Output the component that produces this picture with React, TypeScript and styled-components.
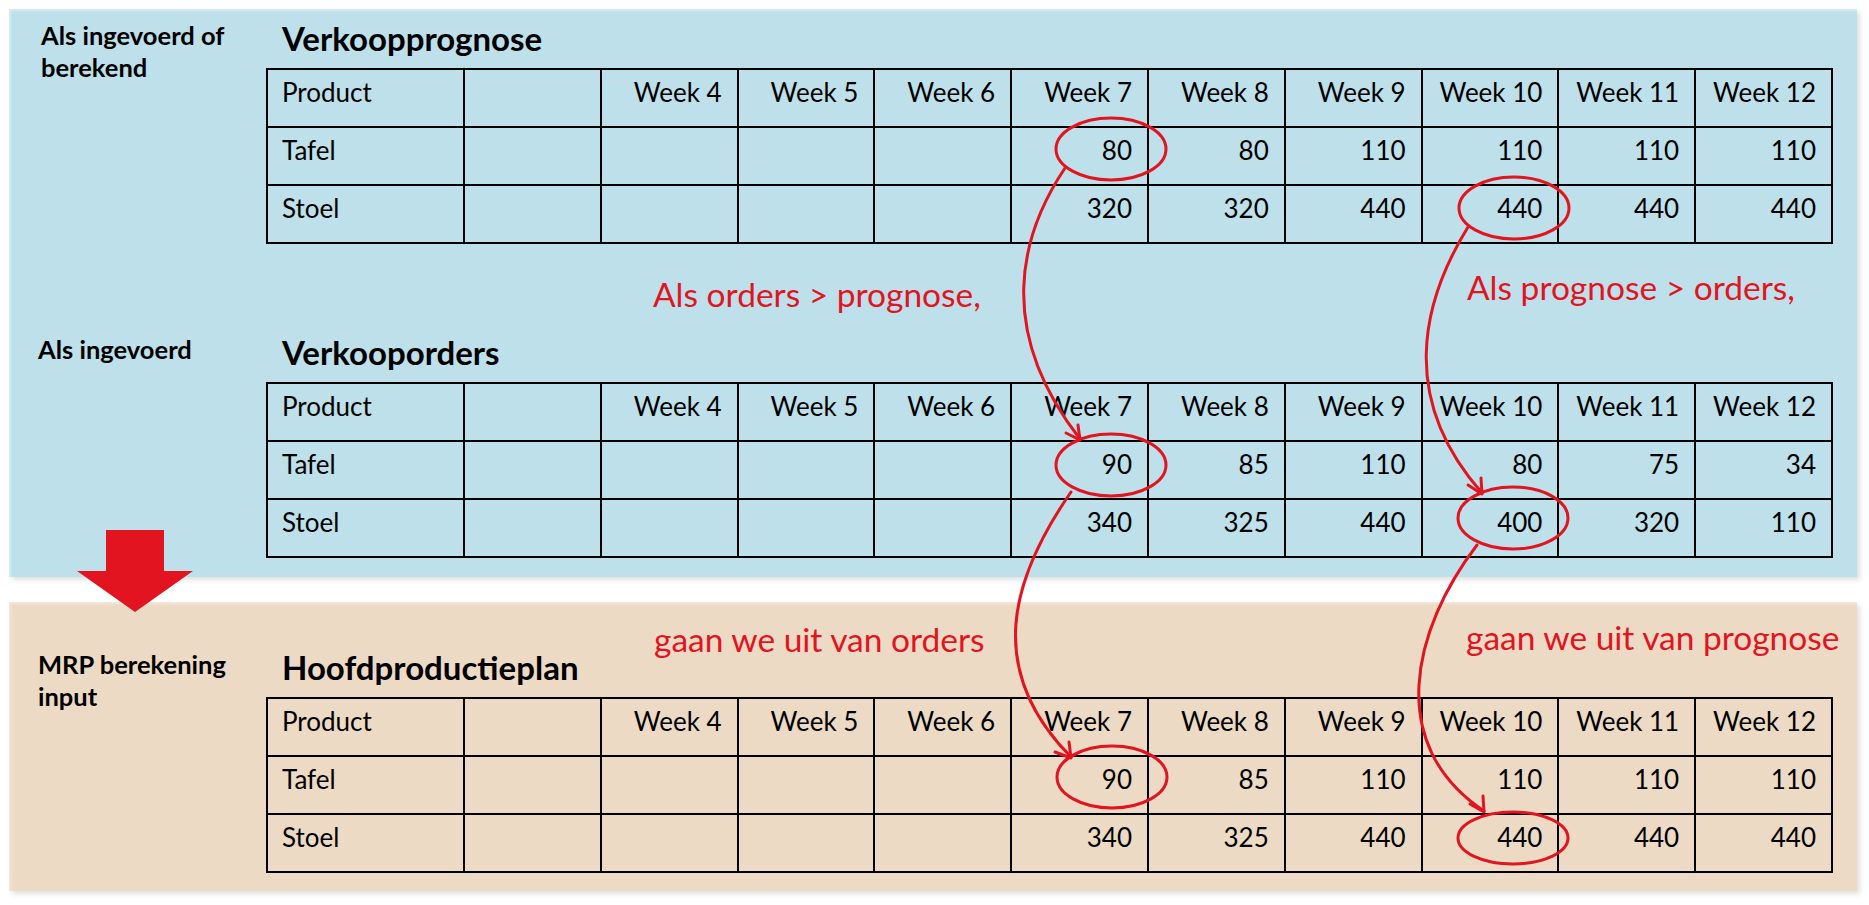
import React from 'react';
import styled, { createGlobalStyle } from 'styled-components';

const RED = '#e2141f';

const GlobalStyle = createGlobalStyle`
  html, body {
    margin: 0;
    padding: 0;
    background: #ffffff;
  }
  body {
    font-family: Lato, 'Liberation Sans', sans-serif;
    color: #000;
  }
`;

const Page = styled.div`
  position: relative;
  width: 1869px;
  height: 905px;
  box-sizing: border-box;
  padding: 9px 0 0 9px;
  display: flex;
  flex-direction: column;
  gap: 25px;
  overflow: hidden;
`;

const Panel = styled.section<{ $tone: 'blue' | 'sand'; $top: number; $bottom: number }>`
  width: 1848px;
  box-sizing: border-box;
  padding: ${(p) => `${p.$top}px 24px ${p.$bottom}px 29px`};
  background: ${(p) => (p.$tone === 'blue' ? '#bde0ea' : '#ecdac5')};
  box-shadow: inset 4px 4px 3px -2px rgba(255, 255, 255, 0.4),
    3px 3px 5px rgba(0, 0, 0, 0.12);
  display: flex;
  flex-direction: column;
  gap: 89px;
`;

const Section = styled.div`
  display: flex;
  align-items: flex-start;
`;

const SideLabel = styled.div<{ $shift?: number }>`
  width: 228px;
  box-sizing: border-box;
  padding-left: ${(p) => p.$shift ?? 0}px;
  font-size: 25.5px;
  font-weight: 700;
  line-height: 32px;
`;

const Body = styled.div`
  display: flex;
  flex-direction: column;
`;

const Heading = styled.h2`
  margin: 0 0 11px;
  padding-left: 16px;
  font-size: 33px;
  font-weight: 700;
  line-height: 38px;
`;

const Table = styled.table`
  width: 1567px;
  table-layout: fixed;
  border-collapse: separate;
  border-spacing: 0;
  border-top: 2px solid #000;
  border-left: 2px solid #000;
`;

const FirstCol = styled.col`
  width: 197px;
`;

const Row = styled.tr`
  height: 58px;
`;

const Cell = styled.td<{ $first?: boolean }>`
  box-sizing: border-box;
  border-right: 2px solid #000;
  border-bottom: 2px solid #000;
  padding: 7px 15px 0 14px;
  vertical-align: top;
  text-align: ${(p) => (p.$first ? 'left' : 'right')};
  font-size: 26px;
  line-height: 30px;
  white-space: nowrap;
`;

const Overlay = styled.svg`
  position: absolute;
  left: 0;
  top: 0;
  width: 1869px;
  height: 905px;
  pointer-events: none;
`;

const Note = styled.span<{ $left: number; $top: number }>`
  position: absolute;
  left: ${(p) => p.$left}px;
  top: ${(p) => p.$top}px;
  color: ${RED};
  font-size: 33.5px;
  line-height: 32px;
  white-space: nowrap;
`;

const weeks = ['Week 4', 'Week 5', 'Week 6', 'Week 7', 'Week 8', 'Week 9', 'Week 10', 'Week 11', 'Week 12'];

type Plan = { title: string; tafel: number[]; stoel: number[] };

const forecast: Plan = {
  title: 'Verkoopprognose',
  tafel: [80, 80, 110, 110, 110, 110],
  stoel: [320, 320, 440, 440, 440, 440],
};

const orders: Plan = {
  title: 'Verkooporders',
  tafel: [90, 85, 110, 80, 75, 34],
  stoel: [340, 325, 440, 400, 320, 110],
};

const master: Plan = {
  title: 'Hoofdproductieplan',
  tafel: [90, 85, 110, 110, 110, 110],
  stoel: [340, 325, 440, 440, 440, 440],
};

function PlanTable({ plan }: { plan: Plan }) {
  const line = (name: string, values: number[]) => (
    <Row>
      <Cell $first>{name}</Cell>
      <Cell />
      <Cell />
      <Cell />
      <Cell />
      {values.map((v, i) => (
        <Cell key={i}>{v}</Cell>
      ))}
    </Row>
  );

  return (
    <Body>
      <Heading>{plan.title}</Heading>
      <Table>
        <colgroup>
          <FirstCol />
        </colgroup>
        <tbody>
          <Row>
            <Cell $first>Product</Cell>
            <Cell />
            {weeks.map((w) => (
              <Cell key={w}>{w}</Cell>
            ))}
          </Row>
          {line('Tafel', plan.tafel)}
          {line('Stoel', plan.stoel)}
        </tbody>
      </Table>
    </Body>
  );
}

function Arrow({ d, head }: { d: string; head: string }) {
  return (
    <g fill="none" stroke={RED} strokeWidth={3} strokeLinecap="round" strokeLinejoin="round">
      <path d={d} />
      <path d={head} />
    </g>
  );
}

function Annotations() {
  const rings = [
    [1111, 149],
    [1514, 208],
    [1111, 465],
    [1513, 518],
    [1112, 777],
    [1513, 838],
  ];
  return (
    <>
      <Overlay viewBox="0 0 1869 905">
        <polygon points="106,530 164,530 164,571 193,571 135,612 77,571 106,571" fill={RED} />
        {rings.map(([cx, cy], i) => (
          <ellipse key={i} cx={cx} cy={cy} rx={55} ry={i === 5 ? 26 : 31} fill="none" stroke={RED} strokeWidth={3} />
        ))}
        <Arrow d="M1065 168 C1020 235 995 330 1080 439" head="M1066 433 L1080 440 L1078 425" />
        <Arrow d="M1468 227 C1420 305 1400 400 1482 493" head="M1468 485 L1482 494 L1481 478" />
        <Arrow d="M1071 492 C1010 580 985 670 1071 757" head="M1055 752 L1071 758 L1069 742" />
        <Arrow d="M1477 545 C1412 630 1385 745 1484 811" head="M1470 804 L1484 812 L1483 796" />
      </Overlay>
      <Note $left={653} $top={278}>Als orders &gt; prognose,</Note>
      <Note $left={1467} $top={271}>Als prognose &gt; orders,</Note>
      <Note $left={654} $top={623}>gaan we uit van orders</Note>
      <Note $left={1466} $top={621}>gaan we uit van prognose</Note>
    </>
  );
}

export default function App() {
  return (
    <>
      <GlobalStyle />
      <Page>
        <Panel $tone="blue" $top={10} $bottom={19}>
          <Section>
            <SideLabel $shift={3}>
              Als ingevoerd of
              <br />
              berekend
            </SideLabel>
            <PlanTable plan={forecast} />
          </Section>
          <Section>
            <SideLabel>Als ingevoerd</SideLabel>
            <PlanTable plan={orders} />
          </Section>
        </Panel>
        <Panel $tone="sand" $top={46} $bottom={18}>
          <Section>
            <SideLabel>
              MRP berekening
              <br />
              input
            </SideLabel>
            <PlanTable plan={master} />
          </Section>
        </Panel>
        <Annotations />
      </Page>
    </>
  );
}
